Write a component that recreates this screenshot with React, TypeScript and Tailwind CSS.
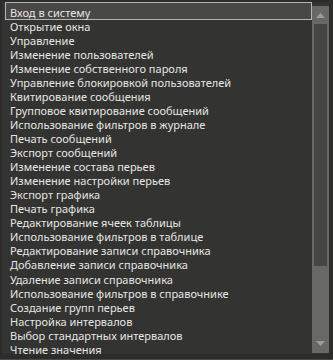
const items = [
  'Вход в систему',
  'Открытие окна',
  'Управление',
  'Изменение пользователей',
  'Изменение собственного пароля',
  'Управление блокировкой пользователей',
  'Квитирование сообщения',
  'Групповое квитирование сообщений',
  'Использование фильтров в журнале',
  'Печать сообщений',
  'Экспорт сообщений',
  'Изменение состава перьев',
  'Изменение настройки перьев',
  'Экспорт графика',
  'Печать графика',
  'Редактирование ячеек таблицы',
  'Использование фильтров в таблице',
  'Редактирование записи справочника',
  'Добавление записи справочника',
  'Удаление записи справочника',
  'Использование фильтров в справочнике',
  'Создание групп перьев',
  'Настройка интервалов',
  'Выбор стандартных интервалов',
  'Чтение значения',
]

export default function App() {
  return (
    <div className="w-[333px] h-[360px] bg-[#2c2c2b] pl-[2px] pt-[2px] pr-[4px] pb-[5px] border-b border-[#4a4a48] font-['Noto_Sans',sans-serif] text-[11px] text-[#e6e6e4] flex">
      <div className="flex-1 bg-[#333331] flex min-w-0">
        <div className="flex-1 min-w-0 pl-[3px]">
          {items.map((item, i) =>
            i === 0 ? (
              <div key={item} className="h-[17.7px] border border-[#b4b4b2] bg-[#484847] pl-[4px] pt-[2.7px] leading-[14px] whitespace-nowrap">
                {item}
              </div>
            ) : (
              <div key={item} className="h-[14.05px] pl-[5px] leading-[14px] whitespace-nowrap">
                {item}
              </div>
            )
          )}
        </div>
        <div className="w-[17px] mt-[4px] mb-[1px] bg-[#686866] flex flex-col items-center">
          <div className="h-[18px] flex items-center justify-center">
            <svg width="9" height="5" viewBox="0 0 9 5">
              <polygon points="4.5,0 9,5 0,5" fill="#9c9c9a" />
            </svg>
          </div>
          <div className="w-[13px] h-[242px] bg-[#454543]" />
          <div className="flex-1 flex items-end justify-center pb-[7px]">
            <svg width="9" height="5" viewBox="0 0 9 5">
              <polygon points="0,0 9,0 4.5,5" fill="#9c9c9a" />
            </svg>
          </div>
        </div>
      </div>
    </div>
  )
}
